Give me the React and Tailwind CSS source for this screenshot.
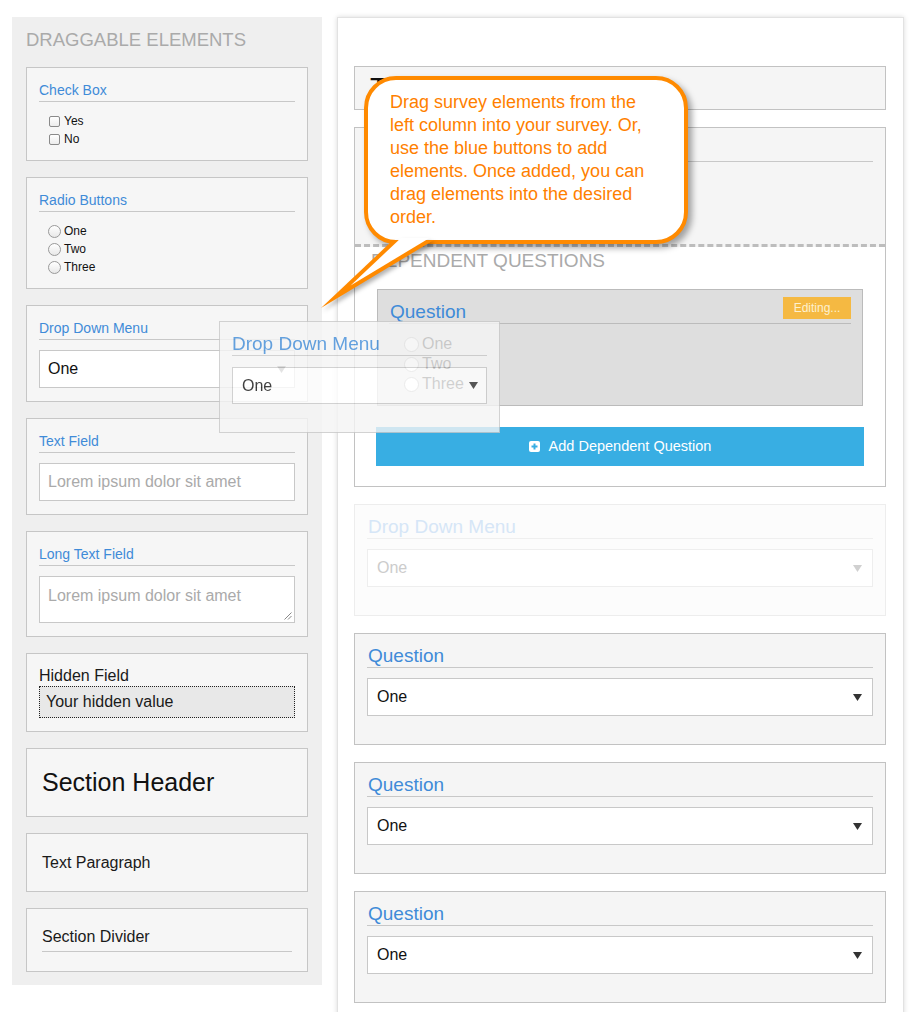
import React from 'react';

const Arrow = ({ color = '#333' }) => (
  <svg width="9" height="7" viewBox="0 0 9 7" className="shrink-0">
    <polygon points="0,0 9,0 4.5,7" fill={color} />
  </svg>
);

const SmallLabel = ({ children }) => (
  <div className="text-[14px] leading-[16px] text-[#3f8bd8] pb-[3px] border-b border-[#c8c8c8]">{children}</div>
);

const BigLabel = ({ children, className = '' }) => (
  <div className={`text-[19px] leading-[22px] border-b ${className}`}>{children}</div>
);

const Card = ({ h, className = '', children }) => (
  <div className={`${h} border border-[#c6c6c6] bg-[#f6f6f6] ${className}`}>{children}</div>
);

const CheckItem = ({ label }) => (
  <div className="h-[18px] flex items-center gap-[4px] pl-[10px]">
    <span className="w-[11px] h-[11px] rounded-[2px] border border-[#8a8a8a] bg-gradient-to-b from-white to-[#ececec]" />
    <span className="text-[12px] text-[#111]">{label}</span>
  </div>
);

const RadioItem = ({ label }) => (
  <div className="h-[18px] flex items-center gap-[3px] pl-[9px]">
    <span className="w-[13px] h-[13px] rounded-full border border-[#999] bg-gradient-to-b from-white to-[#e8e8e8]" />
    <span className="text-[12px] text-[#111]">{label}</span>
  </div>
);

const QuestionBox = ({ label = 'Question', faded = false }) => (
  <div
    className={`h-[112px] border px-[12px] pt-[11px] ${
      faded ? 'border-[#ededed] bg-[#fcfcfc]' : 'border-[#c2c2c2] bg-[#f5f5f5]'
    }`}
  >
    <BigLabel className={faded ? 'text-[#d6e6f7] border-[#efefef] pl-[1px]' : 'text-[#3f8bd8] border-[#c8c8c8] pl-[1px]'}>
      {label}
    </BigLabel>
    <div
      className={`mt-[10px] h-[38px] border bg-white flex items-center justify-between pl-[9px] pr-[10px] text-[16px] ${
        faded ? 'border-[#eeeeee] text-[#cccccc]' : 'border-[#c8c8c8] text-[#111]'
      }`}
    >
      <span>One</span>
      <Arrow color={faded ? '#d0d0d0' : '#333'} />
    </div>
  </div>
);

export default function App() {
  return (
    <div className="relative w-[912px] h-[1012px] overflow-hidden bg-white font-['Liberation_Sans',Arial,sans-serif]">
      <div className="flex items-start gap-[15px] pt-[17px] pl-[12px]">
        {/* left column */}
        <aside className="w-[310px] shrink-0 bg-[#efefef] pt-[12px] px-[14px] pb-[13px]">
          <h2 className="text-[18.5px] leading-[22px] text-[#aaaaaa]">DRAGGABLE ELEMENTS</h2>
          <div className="mt-[16px] flex flex-col gap-[16px]">
            <Card h="h-[94px]" className="px-[12px] pt-[14px]">
              <SmallLabel>Check Box</SmallLabel>
              <div className="mt-[10px]">
                <CheckItem label="Yes" />
                <CheckItem label="No" />
              </div>
            </Card>

            <Card h="h-[112px]" className="px-[12px] pt-[14px]">
              <SmallLabel>Radio Buttons</SmallLabel>
              <div className="mt-[10px]">
                <RadioItem label="One" />
                <RadioItem label="Two" />
                <RadioItem label="Three" />
              </div>
            </Card>

            <Card h="h-[97px]" className="px-[12px] pt-[14px]">
              <SmallLabel>Drop Down Menu</SmallLabel>
              <div className="mt-[10px] h-[38px] border border-[#c8c8c8] bg-white flex items-center justify-between pl-[8px] pr-[8px] text-[16px] text-[#111]">
                <span>One</span>
                <Arrow color="#777" />
              </div>
            </Card>

            <Card h="h-[97px]" className="px-[12px] pt-[14px]">
              <SmallLabel>Text Field</SmallLabel>
              <div className="mt-[10px] h-[38px] border border-[#c8c8c8] bg-white flex items-center pl-[8px] text-[16px] text-[#aaaaaa]">
                Lorem ipsum dolor sit amet
              </div>
            </Card>

            <Card h="h-[106px]" className="px-[12px] pt-[14px]">
              <SmallLabel>Long Text Field</SmallLabel>
              <div className="relative mt-[10px] h-[47px] border border-[#c8c8c8] bg-white pl-[8px] pt-[9px] text-[16px] leading-[19px] text-[#aaaaaa]">
                Lorem ipsum dolor sit amet
                <svg width="8" height="8" viewBox="0 0 8 8" className="absolute right-[2px] bottom-[2px]">
                  <line x1="7.5" y1="0.5" x2="0.5" y2="7.5" stroke="#888" strokeWidth="1" />
                  <line x1="7.5" y1="4" x2="4" y2="7.5" stroke="#888" strokeWidth="1" />
                </svg>
              </div>
            </Card>

            <Card h="h-[79px]" className="px-[12px] pt-[13px]">
              <div className="text-[16px] leading-[18px] text-[#1a1a1a]">Hidden Field</div>
              <div className="mt-[1px] h-[32px] border border-dotted border-[#222] bg-[#e8e8e8] flex items-center pl-[6px] text-[16px] text-[#1a1a1a]">
                Your hidden value
              </div>
            </Card>

            <Card h="h-[69px]" className="flex items-center pl-[15px]">
              <span className="text-[25px] text-[#111]">Section Header</span>
            </Card>

            <Card h="h-[59px]" className="flex items-center pl-[15px]">
              <span className="text-[16px] text-[#1a1a1a]">Text Paragraph</span>
            </Card>

            <Card h="h-[64px]" className="px-[15px] pt-[19px]">
              <div className="text-[16px] leading-[18px] text-[#1a1a1a] pb-[5px] border-b border-[#c8c8c8]">Section Divider</div>
            </Card>
          </div>
        </aside>

        {/* survey canvas */}
        <main className="w-[567px] shrink-0 bg-white border border-[#e2e2e2] shadow-[0_0_5px_rgba(0,0,0,0.15)] pt-[48px] pl-[16px] pr-[17px] pb-[40px] flex flex-col gap-[17px]">
          <div className="h-[44px] border border-[#c2c2c2] bg-[#f5f5f5] flex items-center pl-[15px]">
            <span className="text-[28px] leading-[30px] text-[#111]">Title</span>
          </div>

          <div className="border border-[#c2c2c2]">
            <div className="h-[119px] bg-[#f5f5f5] px-[12px] pt-[11px] border-b-[3px] border-dashed border-[#bdbdbd]">
              <BigLabel className="text-[#3f8bd8] border-[#c8c8c8] pl-[1px]">Question</BigLabel>
              <div className="mt-[10px] pl-[14px] text-[16px] text-[#111]">
                <div className="h-[20px]">One</div>
                <div className="h-[20px]">Two</div>
                <div className="h-[20px]">Three</div>
              </div>
            </div>
            <div className="bg-white px-[22px] pt-[3px] pb-[20px]">
              <div className="-ml-[6px] text-[19px] leading-[22px] text-[#aaaaaa]">DEPENDENT QUESTIONS</div>
              <div className="mt-[17px] h-[117px] border border-[#bbbbbb] bg-[#dedede] px-[11px]">
                <div className="flex justify-between items-start pt-[7px] pl-[1px] border-b border-[#bbbbbb]">
                  <span className="mt-[4px] text-[19px] leading-[22px] text-[#3f8bd8]">Question</span>
                  <span className="h-[22px] w-[68px] bg-[#f5b942] text-[12px] text-[#fdf1cf] flex items-center justify-center">
                    Editing...
                  </span>
                </div>
                <div className="mt-[10px] pl-[15px]">
                  {['One', 'Two', 'Three'].map((o) => (
                    <div key={o} className="h-[20px] flex items-center gap-[3px]">
                      <span className="w-[15px] h-[15px] rounded-full border border-[#999] bg-white" />
                      <span className="text-[16px] text-[#111]">{o}</span>
                    </div>
                  ))}
                </div>
              </div>
              <button className="mt-[21px] -ml-[1px] w-[488px] h-[39px] bg-[#38aee3] flex items-center justify-center gap-[9px] text-[14.5px] text-white">
                <svg width="11" height="11" viewBox="0 0 11 11">
                  <rect x="0" y="0" width="11" height="11" rx="2" fill="#ffffff" />
                  <line x1="5.5" y1="2.5" x2="5.5" y2="8.5" stroke="#38aee3" strokeWidth="2" />
                  <line x1="2.5" y1="5.5" x2="8.5" y2="5.5" stroke="#38aee3" strokeWidth="2" />
                </svg>
                <span>Add Dependent Question</span>
              </button>
            </div>
          </div>

          <QuestionBox label="Drop Down Menu" faded />
          <QuestionBox />
          <QuestionBox />
          <QuestionBox />
        </main>
      </div>

      {/* dragged element ghost */}
      <div className="absolute left-[219px] top-[321px] w-[281px] h-[112px] border border-[#c8c8c8] bg-[#f5f5f5] opacity-80 px-[12px] pt-[11px]">
        <BigLabel className="text-[#3f8bd8] border-[#c8c8c8]">Drop Down Menu</BigLabel>
        <div className="mt-[11px] h-[37px] border border-[#c8c8c8] bg-white flex items-center justify-between pl-[9px] pr-[8px] text-[16px] text-[#111]">
          <span>One</span>
          <Arrow color="#333" />
        </div>
      </div>

      {/* help bubble */}
      <div className="absolute left-[364px] top-[76px] w-[324px] h-[168px] rounded-[32px] border-[4px] border-[#ff8a00] bg-white shadow-[4px_4px_6px_rgba(0,0,0,0.35)] pl-[22px] pt-[11px] text-[18px] leading-[23px] text-[#ff7f00] whitespace-nowrap">
        Drag survey elements from the
        <br />
        left column into your survey. Or,
        <br />
        use the blue buttons to add
        <br />
        elements. Once added, you can
        <br />
        drag elements into the desired
        <br />
        order.
      </div>
      <svg
        width="150"
        height="90"
        viewBox="0 0 150 90"
        className="absolute left-[300px] top-[230px] drop-shadow-[2px_3px_2px_rgba(0,0,0,0.3)]"
      >
        <polygon points="93,10 21,78 134,10" fill="#ff8a00" />
        <polygon points="100.9,8 50.6,55.5 129.5,8" fill="#ffffff" />
      </svg>
    </div>
  );
}
